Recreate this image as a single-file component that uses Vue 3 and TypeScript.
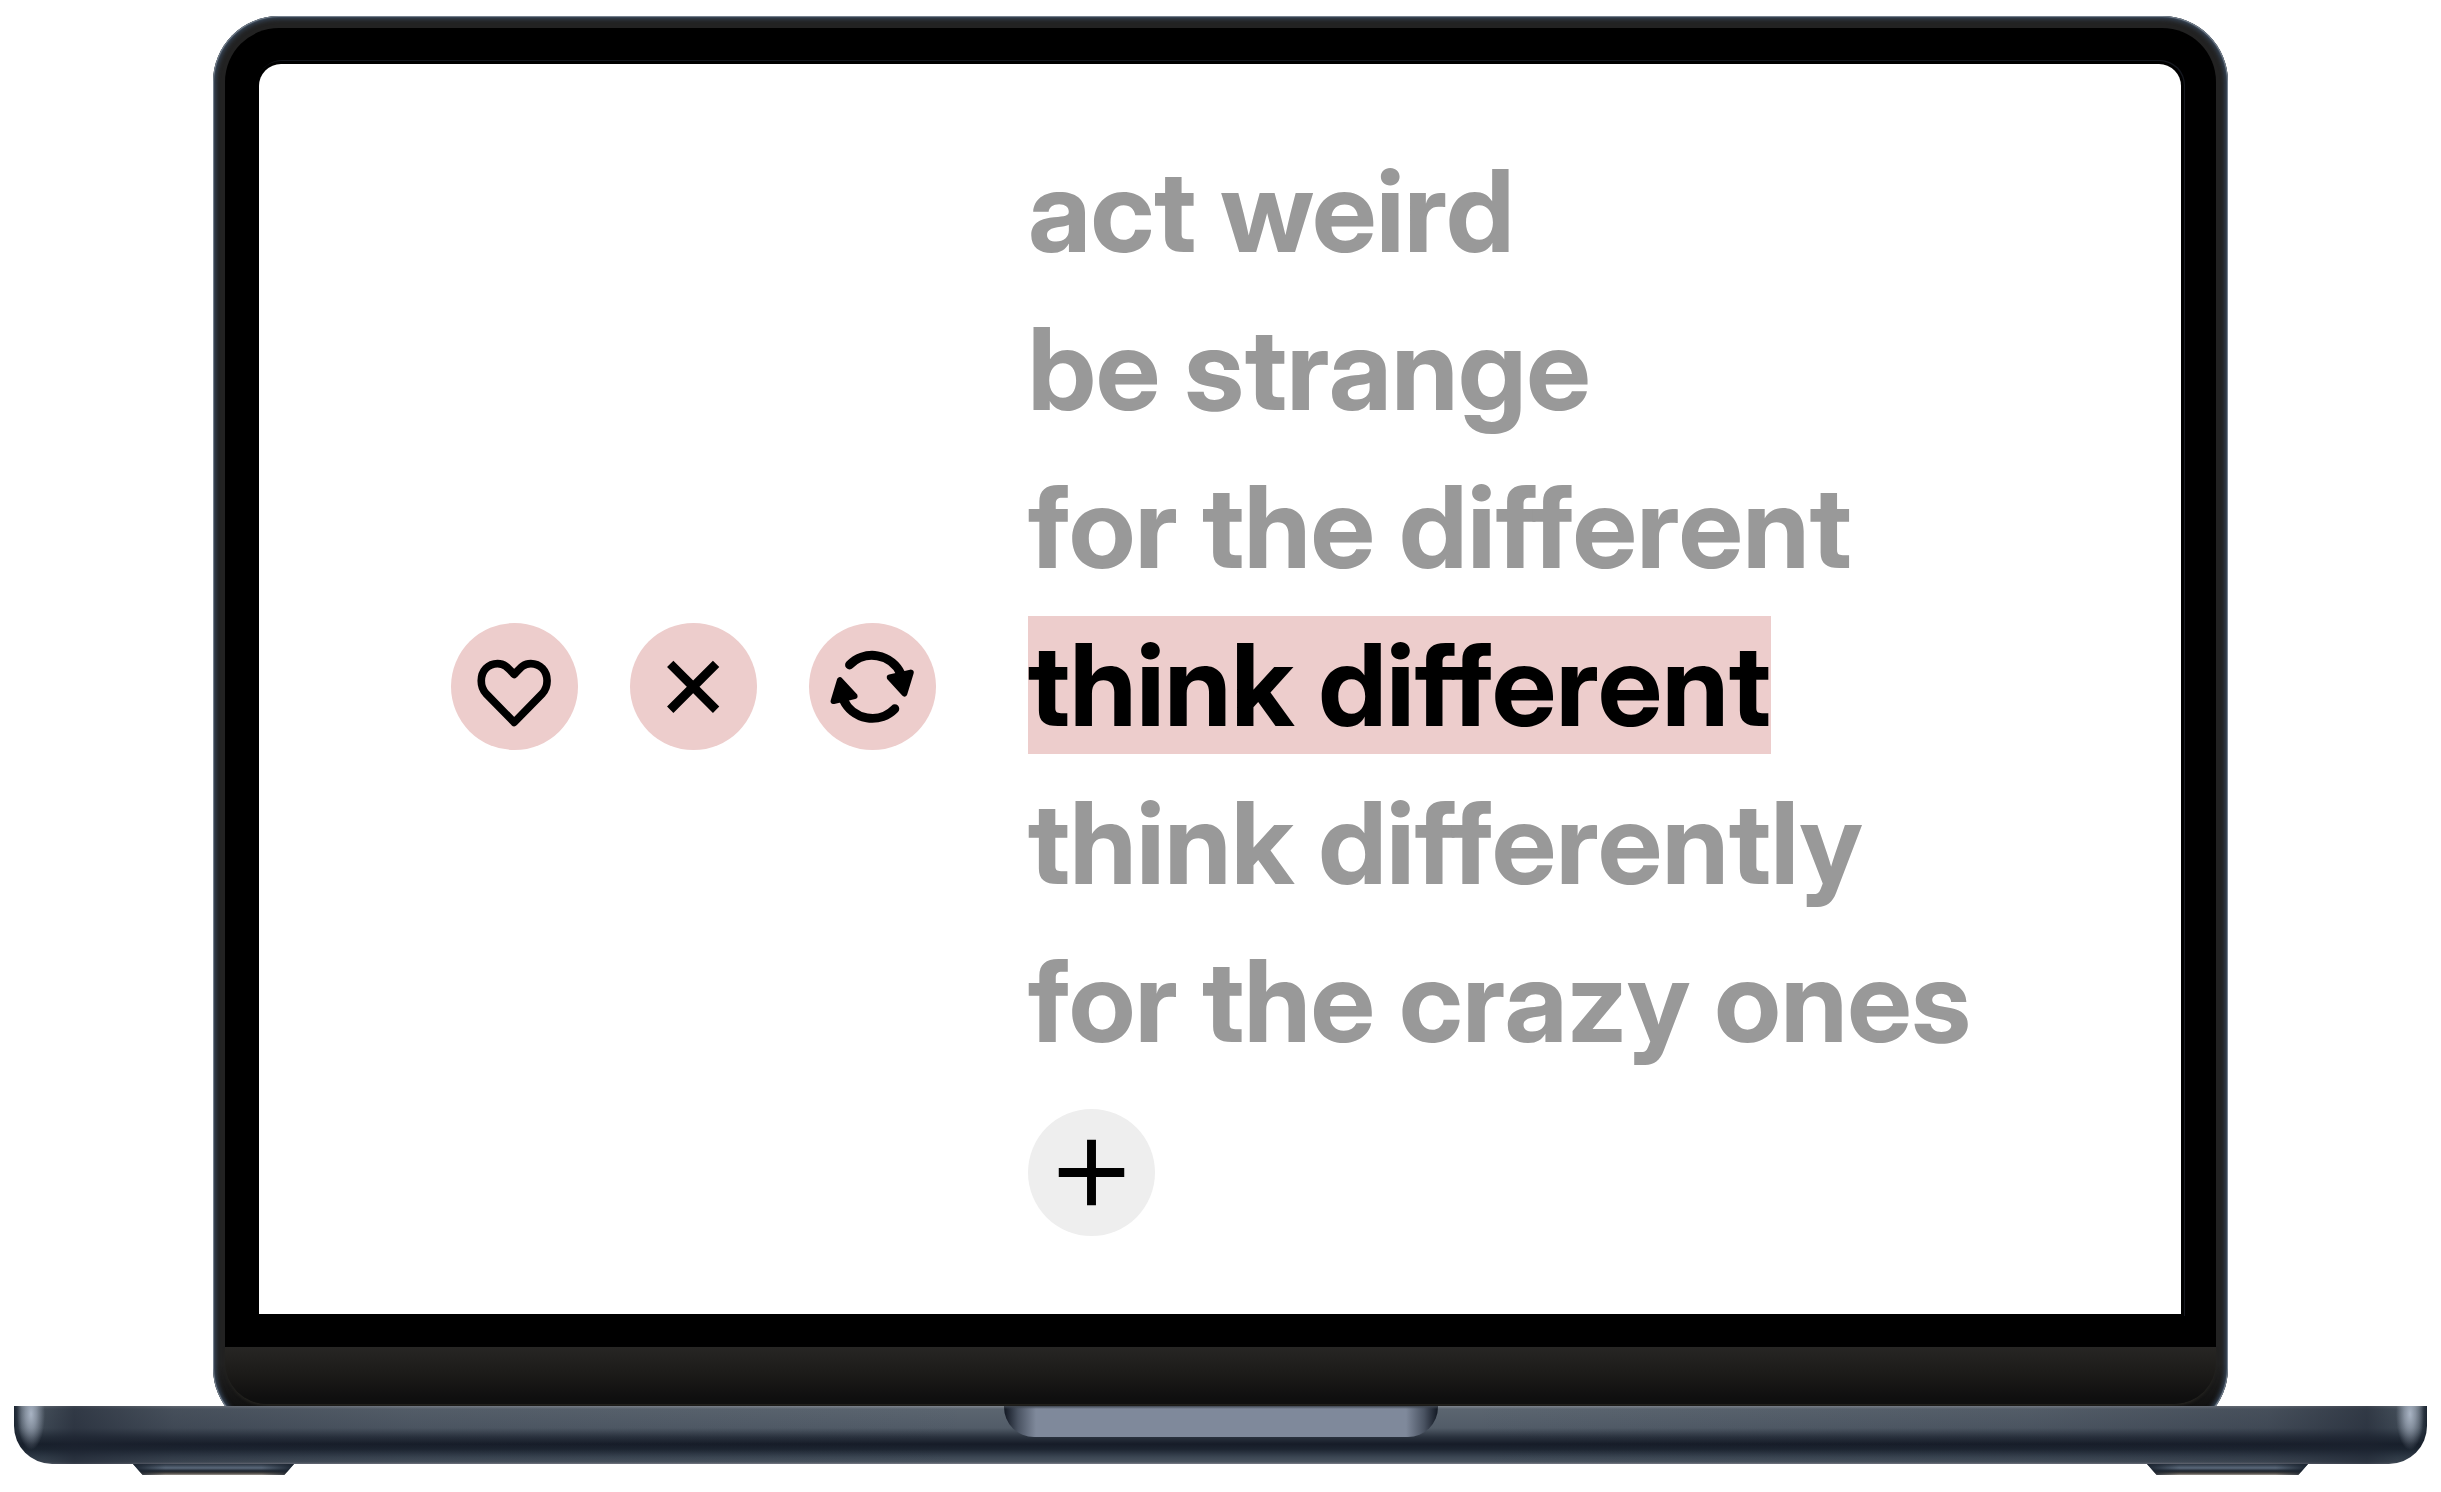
<script setup lang="ts">
import { ref } from 'vue'

const phrases = ref<string[]>([
  'act weird',
  'be strange',
  'for the different',
  'think different',
  'think differently',
  'for the crazy ones',
])
const selected = ref(3)
</script>

<template>
  <main class="laptop">
    <div class="lid">
      <div class="glass">
        <section class="screen" aria-label="Phrases">
          <ul class="phrases">
            <li v-for="(phrase, i) in phrases" :key="phrase" class="row">
              <div class="actions">
                <template v-if="i === selected">
                  <button type="button" class="round" aria-label="Like">
                    <svg viewBox="0 0 382 382" aria-hidden="true">
                      <path
                        d="M190 299 L105 212 C95 201 91 189 91 174 C91 144 112 122 140 122 C160 122 169 132 190 155 C211 132 220 122 240 122 C268 122 289 144 289 174 C289 189 285 201 275 212 Z"
                        fill="none" stroke="#000" stroke-width="23" stroke-linejoin="round" />
                    </svg>
                  </button>
                  <button type="button" class="round" aria-label="Remove">
                    <svg viewBox="0 0 382 382" aria-hidden="true">
                      <path d="M121 123 L259 261 M259 123 L121 261" fill="none" stroke="#000" stroke-width="27" />
                    </svg>
                  </button>
                  <button type="button" class="round" aria-label="Refresh">
                    <svg viewBox="0 0 382 382" aria-hidden="true">
                      <g id="turn" stroke="#000" stroke-linecap="round" stroke-linejoin="round">
                        <path d="M122 126 A95 95 0 0 1 276 152" fill="none" stroke-width="27" />
                        <path d="M306 149 L243 164 L287 212 Z" fill="#000" stroke-width="18" />
                      </g>
                      <use href="#turn" transform="rotate(180 190 192)" />
                    </svg>
                  </button>
                </template>
              </div>
              <button type="button" class="phrase" :class="{ on: i === selected }" @click="selected = i">{{ phrase }}</button>
            </li>
          </ul>
          <div class="row add">
            <span></span>
            <button type="button" class="round grey" aria-label="Add phrase">
              <svg viewBox="0 0 128 128" aria-hidden="true">
                <path d="M64 31 V97 M31 64 H97" fill="none" stroke="#000" stroke-width="9" />
              </svg>
            </button>
          </div>
        </section>
      </div>
      <div class="chin"></div>
    </div>
    <div class="base">
      <div class="notch"></div>
    </div>
    <div class="feet">
      <span class="foot"></span>
      <span class="foot"></span>
    </div>
  </main>
</template>

<style>
body {
  margin: 0;
  background: #fff;
}
</style>

<style scoped>
.laptop {
  padding: 16px 14px;
}

.lid {
  margin: 0 199px -28px;
  padding: 12px 12px 30px;
  border-radius: 66px;
  background: linear-gradient(#222 0, #222 95%, #111 98%);
  box-shadow: inset 0 0 1px 1px #7d8894, inset 0 0 4px 3px #364558;
}

.glass {
  padding: 36px 35px 33px 34px;
  border-radius: 54px 54px 0 0;
  background: #000;
}

.screen {
  box-sizing: border-box;
  padding: 78px 0 77px;
  border-radius: 22px 22px 0 0;
  background: #fff;
  box-shadow: 0 0 0 3px #000, 1px -1px 0 3px #15181f;
}

.phrases {
  display: flex;
  flex-direction: column;
  gap: 20px;
  margin: 0;
  padding: 0;
  list-style: none;
}

.row {
  display: grid;
  grid-template-columns: 40% 60%;
  align-items: center;
  justify-items: start;
}

.actions {
  display: flex;
  justify-self: end;
  gap: 52px;
  padding: 2px 92px 0 0;
}

.phrase {
  padding: 0;
  border: 0;
  background: none;
  color: #999;
  font: 700 114px/138px "Inter Display", Inter, "Liberation Sans", sans-serif;
  font-variation-settings: "opsz" 32;
  white-space: nowrap;
}

.phrase.on {
  background: #edcdcc;
  color: #000;
}

.round {
  width: 127px;
  height: 127px;
  padding: 0;
  border: 0;
  border-radius: 50%;
  background: #edcdcc;
}

.round svg {
  display: block;
  width: 100%;
  height: 100%;
}

.round.grey {
  background: #eee;
}

.add {
  margin: 39px 0 1px;
}

.chin {
  height: 57px;
  border-radius: 0 0 42px 42px;
  background: linear-gradient(#272624, #1b1a18 50%, #0f0f0f 90%);
  box-shadow: 0 2px 3px #24231f;
}

.base {
  position: relative;
  display: flex;
  justify-content: center;
  height: 58px;
  border-radius: 0 0 38px 38px;
  background:
    radial-gradient(ellipse 14px 36px at 17px 8px, #a9b4c4 0, #a9b4c4aa 40%, #a9b4c400 100%),
    radial-gradient(ellipse 14px 36px at calc(100% - 17px) 8px, #a9b4c4 0, #a9b4c4aa 40%, #a9b4c400 100%),
    linear-gradient(90deg, #1a2430 0, #1a243066 8px, #1a243066 30px, #1c2330aa 60px, #1c233055 160px, #1c233022 400px, #1c233000 40%, #1c233000 60%, #1c233022 calc(100% - 400px), #1c233055 calc(100% - 160px), #1c2330aa calc(100% - 60px), #1a243066 calc(100% - 30px), #1a243066 calc(100% - 8px), #1a2430 100%),
    linear-gradient(#80868e 0, #5b6570 3px, #525c68 22px, #2a323e 31px, #161c28 38px, #1c2430 43px, #3b4653 51px, #4a545f 56px, #7b7d88 58px);
}

.notch {
  width: 434px;
  height: 31px;
  border-radius: 0 0 30px 30px;
  background:
    linear-gradient(#3f4650 0, #3f465000 3px),
    linear-gradient(90deg, #111722 0, #4a5362 14px, #7f899b 32px, #7f899b calc(100% - 32px), #4a5362 calc(100% - 14px), #111722 100%);
}

.feet {
  display: flex;
  justify-content: space-between;
  padding: 0 119px;
}

.foot {
  width: 161px;
  height: 11px;
  clip-path: polygon(0 0, 100% 0, 94% 100%, 6% 100%);
  background:
    linear-gradient(90deg, #1b2430 0, #1b243000 20%, #1b243000 80%, #1b2430 100%),
    linear-gradient(#2b3542 0, #5a687a 4px, #1c232d 7px, #45423f 9px, #9a948e 11px);
}
</style>
